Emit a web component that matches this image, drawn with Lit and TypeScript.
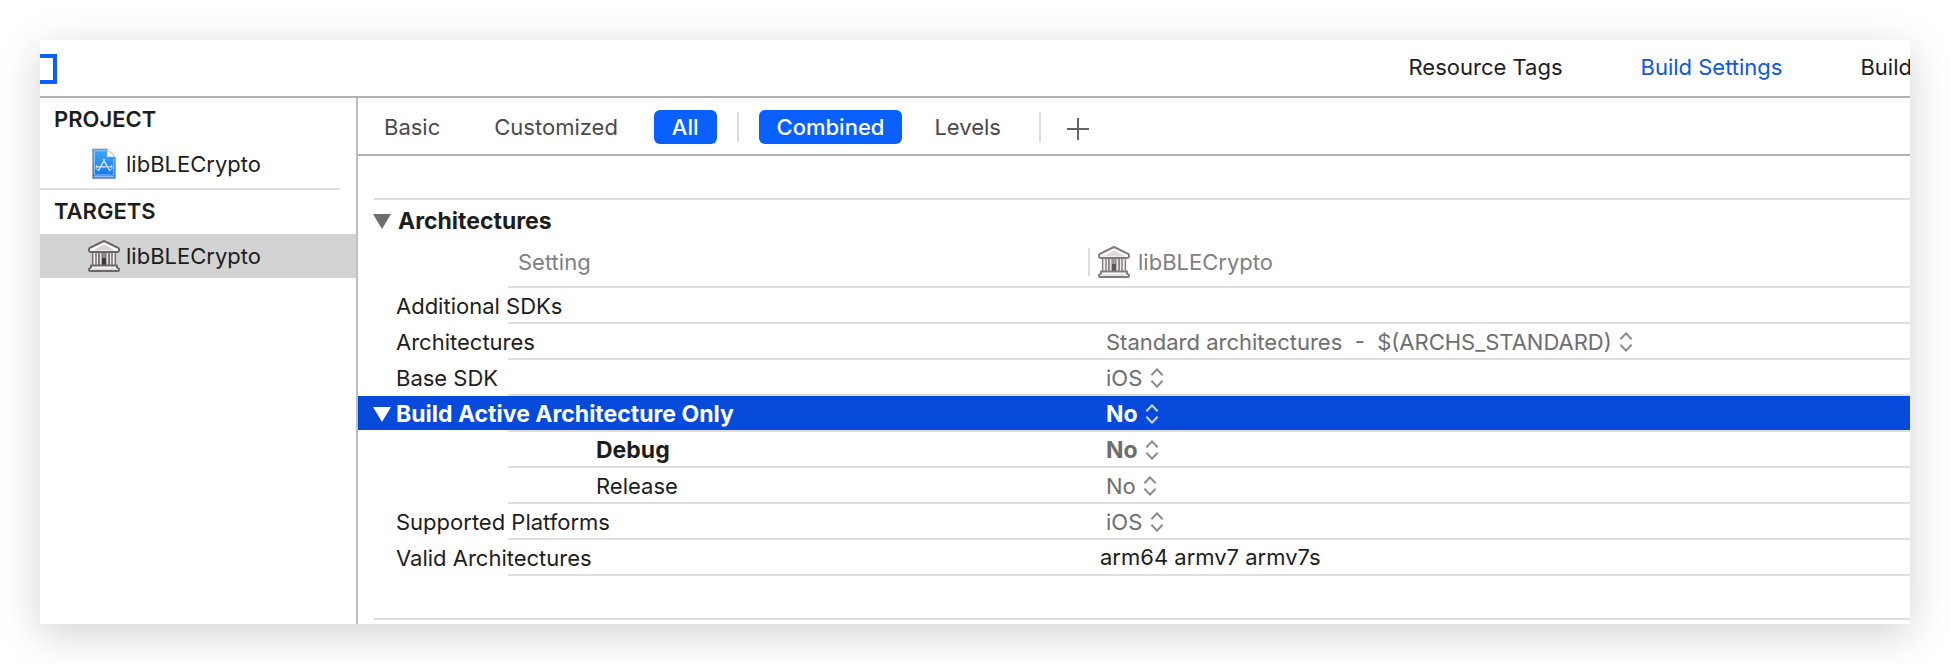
import { LitElement, html, css, svg, nothing } from "lit";
import { customElement, property, state } from "lit/decorators.js";
import { classMap } from "lit/directives/class-map.js";

const libraryIcon = html`<svg class="lib-icon" width="32" height="32" viewBox="0 0 32 32" aria-hidden="true">
  <rect x="4" y="11" width="24" height="15" fill="#eee9ea"></rect>
  <rect x="10" y="11" width="12" height="15" fill="#8d8485"></rect>
  <rect x="14" y="18" width="4" height="8" fill="#3c3939"></rect>
  ${[4.6, 8, 11, 21, 24, 27.4].map(
    (x) => svg`<path d="M${x} 11.5V26" stroke="#6f6768" stroke-width="1.4"></path>`
  )}
  <path d="M12.6 13V26M19.4 13V26" stroke="#e4dcde" stroke-width="1.6"></path>
  <path d="M16 1 30.6 8.2Q31 8.5 31 9.2V10.6Q31 12 29.6 12H2.4Q1 12 1 10.6V9.2Q1 8.5 1.4 8.2Z" fill="#fff" stroke="#6b6667" stroke-width="2" stroke-linejoin="round"></path>
  <path d="M16 4.2 27 10.6H5Z" fill="#d9d3d5"></path>
  <path d="M3 25.5H29V27.6L31 28.8V30Q31 31 30 31H2Q1 31 1 30V28.8L3 27.6Z" fill="#fff" stroke="#6b6667" stroke-width="2" stroke-linejoin="round"></path>
  <path d="M3 29H29" stroke="#d9d3d5" stroke-width="1.4"></path>
</svg>`;

const projectIcon = html`<svg class="proj-icon" width="24" height="32" viewBox="0 0 24 32" aria-hidden="true">
  <defs>
    <linearGradient id="sheet" x1="0" y1="0" x2="0" y2="1">
      <stop offset="0" stop-color="#3fa9f5"></stop>
      <stop offset="1" stop-color="#1470fa"></stop>
    </linearGradient>
  </defs>
  <path d="M.7 1H15L23.3 9V30.6H.7Z" fill="url(#sheet)" stroke="#8d9299" stroke-width=".8"></path>
  <path d="M2.4 2.8H13.6M21.6 11V27H2.4V2.8" fill="none" stroke="#a9d5ff" stroke-width=".8"></path>
  <path d="M2 28.8H22" stroke="#cfe4ff" stroke-width=".9"></path>
  <path d="M15 1V9H23.3Z" fill="#f4f6f8" stroke="#a5abb2" stroke-width=".6"></path>
  <g fill="none" stroke="#c4e2ff" stroke-width="1.5" stroke-linecap="round">
    <path d="M12.6 11.5 6.6 22.4M11.4 11.5 17.6 22.4M4.5 18.8H14M17.5 18.8H19.5"></path>
    <path d="M4.4 17.2 4.2 20.5 6 22.6M19.6 17.2 20 20.4 18.2 22.6" stroke-width="1"></path>
  </g>
</svg>`;

const stepperIcon = html`<svg class="stepper" width="14" height="20" viewBox="0 0 14 20" aria-hidden="true">
  <path d="M1.4 7.2 7 1.4 12.6 7.2M1.4 12.8 7 18.6 12.6 12.8" fill="none" stroke="currentColor" stroke-width="2"></path>
</svg>`;

const disclosureIcon = html`<svg class="triangle" width="18" height="15" viewBox="0 0 18 15" aria-hidden="true">
  <path d="M0 0H18L9 15Z" fill="currentColor"></path>
</svg>`;

interface Setting {
  name: string;
  value?: string;
  kind?: "choice" | "text";
  strong?: boolean;
  child?: boolean;
  open?: boolean;
}

const SETTINGS: Setting[] = [
  { name: "Additional SDKs" },
  {
    name: "Architectures",
    value: "Standard architectures\u00a0 -\u00a0 $(ARCHS_STANDARD)",
    kind: "choice",
  },
  { name: "Base SDK", value: "iOS", kind: "choice" },
  { name: "Build Active Architecture Only", value: "No", kind: "choice", strong: true, open: true },
  { name: "Debug", value: "No", kind: "choice", strong: true, child: true },
  { name: "Release", value: "No", kind: "choice", child: true },
  { name: "Supported Platforms", value: "iOS", kind: "choice" },
  { name: "Valid Architectures", value: "arm64 armv7 armv7s", kind: "text" },
];

const shared = css`
  * {
    box-sizing: border-box;
  }
  button,
  select,
  input {
    font: inherit;
    color: inherit;
    margin: 0;
    padding: 0;
    border: 0;
    background: none;
    appearance: none;
    outline: none;
  }
  svg {
    display: block;
    flex: none;
  }
`;

@customElement("target-sidebar")
export class TargetSidebar extends LitElement {
  static styles = [
    shared,
    css`
      :host {
        display: block;
        border-right: 2px solid #bfbfbf;
      }
      .heading {
        margin: 0;
        padding-left: 14px;
        font-size: 22px;
        font-weight: 600;
        line-height: 42px;
      }
      .item {
        display: flex;
        align-items: center;
        gap: 6px;
        width: 100%;
        height: 44px;
        margin: 2px 0;
        padding-left: 48px;
        text-align: left;
      }
      .item.on {
        background: #d3d3d3;
      }
      .slot {
        display: flex;
        justify-content: center;
        width: 32px;
      }
      .rule {
        height: 2px;
        margin: 0 16px 0 0;
        border: 0;
        background: #dfdfdf;
      }
    `,
  ];

  render() {
    return html`
      <h2 class="heading">PROJECT</h2>
      <button class="item"><span class="slot">${projectIcon}</span>libBLECrypto</button>
      <hr class="rule" />
      <h2 class="heading">TARGETS</h2>
      <button class="item on"><span class="slot">${libraryIcon}</span>libBLECrypto</button>
    `;
  }
}

@customElement("filter-bar")
export class FilterBar extends LitElement {
  @state() private scope = "All";
  @state() private view = "Combined";

  static styles = [
    shared,
    css`
      :host {
        display: flex;
        align-items: center;
        box-sizing: border-box;
        height: 58px;
        padding: 2px 8px 0;
        border-bottom: 2px solid #b2b2b2;
        color: #4a4a4a;
      }
      .pill {
        height: 34px;
        padding: 0 18px;
        border-radius: 6px;
      }
      .pill.on {
        background: #0a60ff;
        color: #fff;
        font-weight: 500;
      }
      .group {
        display: flex;
        gap: 18px;
      }
      .group.views {
        gap: 14px;
      }
      .bar {
        width: 2px;
        height: 30px;
        margin: 0 20px;
        background: #dcdcdc;
      }
      .add {
        padding: 4px 6px 0;
        color: #666;
      }
    `,
  ];

  private pill(label: string, current: string, pick: (v: string) => void) {
    return html`<button
      class=${classMap({ pill: true, on: label === current })}
      aria-pressed=${label === current}
      @click=${() => pick(label)}
    >${label}</button>`;
  }

  render() {
    return html`
      <div class="group">
        ${["Basic", "Customized", "All"].map((l) => this.pill(l, this.scope, (v) => (this.scope = v)))}
      </div>
      <span class="bar"></span>
      <div class="group views">
        ${["Combined", "Levels"].map((l) => this.pill(l, this.view, (v) => (this.view = v)))}
      </div>
      <span class="bar"></span>
      <button class="add" aria-label="Add">
        <svg width="22" height="22" viewBox="0 0 22 22"><path d="M11 0V22M0 11H22" stroke="currentColor" stroke-width="2"></path></svg>
      </button>
    `;
  }
}

@customElement("settings-table")
export class SettingsTable extends LitElement {
  @property({ attribute: false }) rows: Setting[] = [];

  static styles = [
    shared,
    css`
      :host {
        display: block;
        padding-top: 42px;
      }
      .section {
        display: flex;
        align-items: center;
        gap: 7px;
        height: 48px;
        margin-left: 15px;
        padding-bottom: 2px;
        background: linear-gradient(#dfdfdf, #dfdfdf) 1px 0 / 100% 2px no-repeat;
      }
      .section .triangle {
        color: #6e6e6e;
      }
      .title {
        margin: 0;
        font-size: 23px;
        font-weight: 700;
      }
      .grid,
      .grid thead,
      .grid tbody {
        display: block;
      }
      .row {
        display: grid;
        grid-template-columns: 730px minmax(0, 1fr);
        align-items: center;
        height: 36px;
        background: linear-gradient(#dfdfdf, #dfdfdf) 150px 100% / 100% 2px no-repeat;
      }
      .row.head {
        height: 42px;
        padding-bottom: 10px;
        color: #808080;
      }
      .row.on {
        background:
          linear-gradient(#dfdfdf, #dfdfdf) 150px 100% / 100% 2px no-repeat,
          linear-gradient(#064adb, #064adb) 0 0 / 100% 34px no-repeat;
        color: #fff;
      }
      .name,
      .value {
        display: flex;
        align-items: center;
        padding: 0;
        font-weight: 400;
        text-align: left;
        white-space: nowrap;
      }
      .name {
        padding-left: 38px;
      }
      .head .name {
        padding-left: 160px;
      }
      .child .name {
        padding-left: 238px;
      }
      .open .name {
        gap: 5px;
        padding-left: 15px;
      }
      .strong .name,
      .strong .value {
        font-size: 23px;
        font-weight: 700;
      }
      .value {
        gap: 7px;
        padding-left: 18px;
        color: #6e6e6e;
      }
      .on .value {
        color: #fff;
      }
      .value.text {
        padding-left: 12px;
        padding-bottom: 2px;
        color: #1d1d1d;
      }
      .head .value {
        gap: 8px;
        padding-left: 8px;
        border-left: 2px solid #dcdcdc;
        height: 28px;
        color: #808080;
      }
      .value .stepper {
        opacity: 0.8;
      }
      .value .lib-icon {
        opacity: 0.85;
      }
      .end {
        height: 2px;
        margin: 42px 0 4px 16px;
        border: 0;
        background: #dfdfdf;
      }
    `,
  ];

  private row(s: Setting, i: number) {
    const id = `setting-${i}`;
    return html`<tr
      class=${classMap({ row: true, on: !!s.open, open: !!s.open, strong: !!s.strong, child: !!s.child })}
    >
      <th class="name" scope="row">
        ${s.open ? disclosureIcon : nothing}<label for=${id}>${s.name}</label>
      </th>
      <td class=${classMap({ value: true, text: s.kind === "text" })}>
        ${s.kind === "choice"
          ? html`<select id=${id}><option>${s.value}</option></select>${stepperIcon}`
          : html`<input id=${id} type="text" .value=${s.value ?? ""} />`}
      </td>
    </tr>`;
  }

  render() {
    return html`
      <div class="section">
        ${disclosureIcon}
        <h3 class="title">Architectures</h3>
      </div>
      <table class="grid">
        <thead>
          <tr class="row head">
            <th class="name" scope="col">Setting</th>
            <th class="value" scope="col">${libraryIcon}libBLECrypto</th>
          </tr>
        </thead>
        <tbody>
          ${this.rows.map((s, i) => this.row(s, i))}
        </tbody>
      </table>
      <hr class="end" />
    `;
  }
}

@customElement("app-root")
export class AppRoot extends LitElement {
  static styles = [
    shared,
    css`
      :host {
        display: block;
        padding: 40px;
        overflow: hidden;
        background: #fff;
        color: #1d1d1d;
        font-family: Inter, "Liberation Sans", sans-serif;
        font-size: 22px;
        line-height: 28px;
      }
      .panel {
        background: #fff;
        box-shadow: 0 10px 40px rgba(0, 0, 0, 0.18);
      }
      .top {
        display: flex;
        align-items: center;
        justify-content: space-between;
        height: 58px;
        padding-top: 2px;
        overflow: hidden;
        border-bottom: 2px solid #b2b2b2;
      }
      .toggle {
        width: 17px;
        height: 30px;
        border: 4px solid #0a60ff;
        border-left: 0;
      }
      .tabs {
        display: flex;
        gap: 78px;
        margin-right: -2px;
        padding-bottom: 4px;
        white-space: nowrap;
      }
      .tab {
        color: inherit;
        text-decoration: none;
      }
      .tab.on {
        color: #0f57dd;
      }
      .body {
        display: grid;
        grid-template-columns: 318px minmax(0, 1fr);
      }
    `,
  ];

  render() {
    return html`
      <main class="panel">
        <header class="top">
          <button class="toggle" aria-label="Toggle target list"></button>
          <nav class="tabs">
            <a class="tab" href="#tags">Resource Tags</a>
            <a class="tab on" href="#settings" aria-current="page">Build Settings</a>
            <a class="tab" href="#build">Build</a>
          </nav>
        </header>
        <div class="body">
          <target-sidebar></target-sidebar>
          <section>
            <filter-bar></filter-bar>
            <settings-table .rows=${SETTINGS}></settings-table>
          </section>
        </div>
      </main>
    `;
  }
}
